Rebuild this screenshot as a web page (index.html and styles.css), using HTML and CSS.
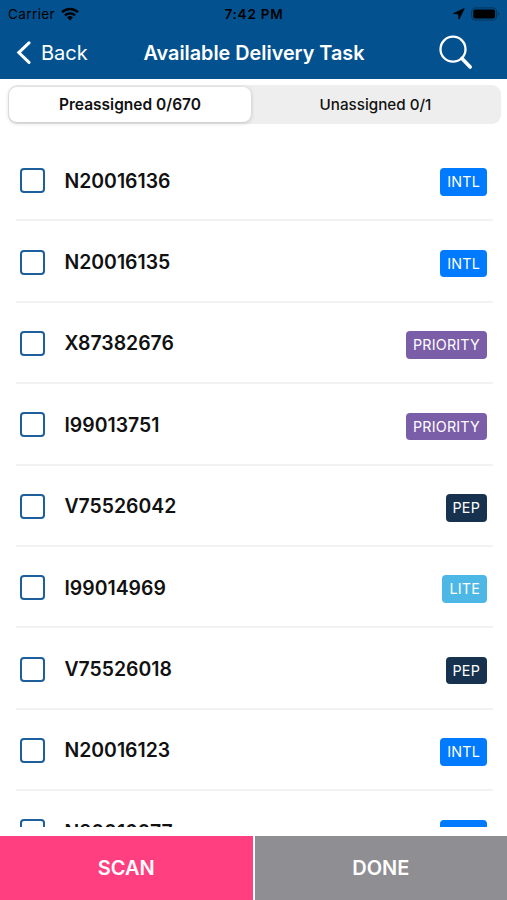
FILE: index.html
```html
<!DOCTYPE html>
<html lang="en">
<head>
    <meta charset="UTF-8">
    <meta name="viewport" content="width=device-width, initial-scale=1.0">
    <title>Available Delivery Task</title>
    <link rel="stylesheet" href="styles.css">
</head>
<body>
    <header class="header">
        <div class="status-bar">
            <div class="carrier">
                <span class="carrier-name">Carrier</span>
                <svg class="wifi-icon" width="18" height="14" viewBox="0 0 18 14" fill="none" stroke="#000" stroke-width="2.4">
                    <path d="M1 5.2a11.6 11.6 0 0 1 16 0"/>
                    <path d="M3.9 8.4a7.4 7.4 0 0 1 10.2 0"/>
                    <path d="M9 13.4 6.1 10.5a4.2 4.2 0 0 1 5.8 0z" fill="#000" stroke="none"/>
                </svg>
            </div>
            <div class="time">7:42 PM</div>
            <div class="indicators">
                <svg width="12" height="12" viewBox="0 0 12 12">
                    <path d="M11.2.6.6 5.5l5 .5.4 5.2z" fill="#000" stroke="#000" stroke-width=".8" stroke-linejoin="round"/>
                </svg>
                <svg width="29" height="14" viewBox="0 0 29 14">
                    <rect x=".7" y=".9" width="25" height="12.2" rx="3.6" fill="none" stroke="#000" stroke-opacity=".35"/>
                    <rect x="2.3" y="2.5" width="21.8" height="9" rx="2" fill="#000"/>
                    <path d="M27 4.8q1.8 2.2 0 4.4z" fill="#000" fill-opacity=".4"/>
                </svg>
            </div>
        </div>
        <nav class="nav-bar">
            <button class="back-button">
                <svg width="15" height="24" viewBox="0 0 15 24" fill="none" stroke="#fff" stroke-width="3" stroke-linecap="round">
                    <path d="M13 1.9 2.8 11.6 13 21.4"/>
                </svg>
                <span>Back</span>
            </button>
            <h1>Available Delivery Task</h1>
            <button class="search-button" aria-label="Search">
                <svg width="36" height="36" viewBox="0 0 36 36" fill="none" stroke="#fff" stroke-linecap="round">
                    <circle cx="15" cy="14.2" r="12.5" stroke-width="2.3"/>
                    <path d="m24 23.4 8.2 8.6" stroke-width="3.6"/>
                </svg>
            </button>
        </nav>
    </header>

    <div class="tabs">
        <button class="tab active">Preassigned 0/670</button>
        <button class="tab">Unassigned 0/1</button>
    </div>

    <ul class="task-list">
        <li class="task">
            <span class="checkbox"></span>
            <span class="task-id">N20016136</span>
            <span class="badge intl">INTL</span>
        </li>
        <li class="task">
            <span class="checkbox"></span>
            <span class="task-id">N20016135</span>
            <span class="badge intl">INTL</span>
        </li>
        <li class="task">
            <span class="checkbox"></span>
            <span class="task-id">X87382676</span>
            <span class="badge priority">PRIORITY</span>
        </li>
        <li class="task">
            <span class="checkbox"></span>
            <span class="task-id">I99013751</span>
            <span class="badge priority">PRIORITY</span>
        </li>
        <li class="task">
            <span class="checkbox"></span>
            <span class="task-id">V75526042</span>
            <span class="badge pep">PEP</span>
        </li>
        <li class="task">
            <span class="checkbox"></span>
            <span class="task-id">I99014969</span>
            <span class="badge lite">LITE</span>
        </li>
        <li class="task">
            <span class="checkbox"></span>
            <span class="task-id">V75526018</span>
            <span class="badge pep">PEP</span>
        </li>
        <li class="task">
            <span class="checkbox"></span>
            <span class="task-id">N20016123</span>
            <span class="badge intl">INTL</span>
        </li>
        <li class="task">
            <span class="checkbox"></span>
            <span class="task-id">N20016077</span>
            <span class="badge intl">INTL</span>
        </li>
    </ul>

    <footer class="actions">
        <button class="action scan">SCAN</button>
        <button class="action done">DONE</button>
    </footer>
</body>
</html>
```

FILE: styles.css
```css
* {
    margin: 0;
    padding: 0;
    box-sizing: border-box;
}

body {
    font-family: Inter, 'Liberation Sans', sans-serif;
    background: #fff;
    color: #111;
    height: 100vh;
    display: flex;
    flex-direction: column;
    overflow: hidden;
}

button {
    font-family: inherit;
    border: none;
    background: none;
    cursor: pointer;
}

svg {
    display: block;
    flex-shrink: 0;
}

.header {
    height: 79px;
    flex-shrink: 0;
    background: #03528f;
}

.status-bar {
    height: 27px;
    display: grid;
    grid-template-columns: 1fr auto 1fr;
    align-items: center;
    padding: 0 7px 0 8px;
    color: #000;
    font-size: 13.5px;
}

.carrier {
    display: flex;
    align-items: center;
    gap: 6px;
    letter-spacing: 0.4px;
}

.time {
    font-weight: 600;
    font-size: 13.5px;
    letter-spacing: 0.8px;
}

.indicators {
    display: flex;
    align-items: center;
    justify-content: flex-end;
    gap: 6px;
}

.nav-bar {
    height: 52px;
    display: grid;
    grid-template-columns: 1fr auto 1fr;
    align-items: center;
    padding: 0 15px 0 16px;
    color: #fff;
}

.back-button {
    display: flex;
    align-items: center;
    gap: 10px;
    color: #fff;
    font-size: 20px;
}

h1 {
    font-size: 19.8px;
    font-weight: 600;
    white-space: nowrap;
}

.search-button {
    justify-self: end;
    margin-right: 18px;
}

.tabs {
    height: 39px;
    flex-shrink: 0;
    margin: 6px 6px 0 8px;
    padding: 2px 1px;
    display: flex;
    background: #eee;
    border-radius: 9px;
}

.tab {
    flex: 1;
    border-radius: 8px;
    color: #111;
    font-size: 15.2px;
    font-weight: 500;
}

.tab.active {
    flex: 0 0 242px;
    background: #fff;
    font-size: 15.5px;
    font-weight: 600;
    box-shadow: 0 1px 4px rgba(0, 0, 0, 0.2);
}

.task-list {
    list-style: none;
    height: 686.5px;
    margin-top: 16px;
    padding: 0 14px 0 16px;
    overflow: hidden;
}

.task {
    height: 81.4px;
    display: flex;
    align-items: center;
    padding: 2px 6px 0 4px;
    border-bottom: 2px solid #f2f2f3;
}

.checkbox {
    width: 25px;
    height: 25px;
    border: 2px solid #1c5f9c;
    border-radius: 4px;
}

.task-id {
    margin-left: 19.5px;
    font-size: 19.4px;
    font-weight: 600;
}

.badge {
    height: 27.5px;
    margin: 3px 0 0 auto;
    padding: 0 7px;
    border-radius: 4px;
    color: #fff;
    font-size: 14.3px;
    letter-spacing: 0.2px;
    line-height: 28px;
}

.intl {
    background: #007aff;
}

.priority {
    background: #7a5ea8;
}

.pep {
    background: #16324f;
}

.lite {
    background: #4db8e5;
}

.actions {
    height: 64px;
    margin-top: auto;
    flex-shrink: 0;
    display: flex;
    gap: 2px;
}

.action {
    flex: 1;
    color: #fff;
    font-size: 20px;
    font-weight: 600;
}

.scan {
    background: #ff3f7f;
}

.done {
    background: #8e8e93;
}
```
